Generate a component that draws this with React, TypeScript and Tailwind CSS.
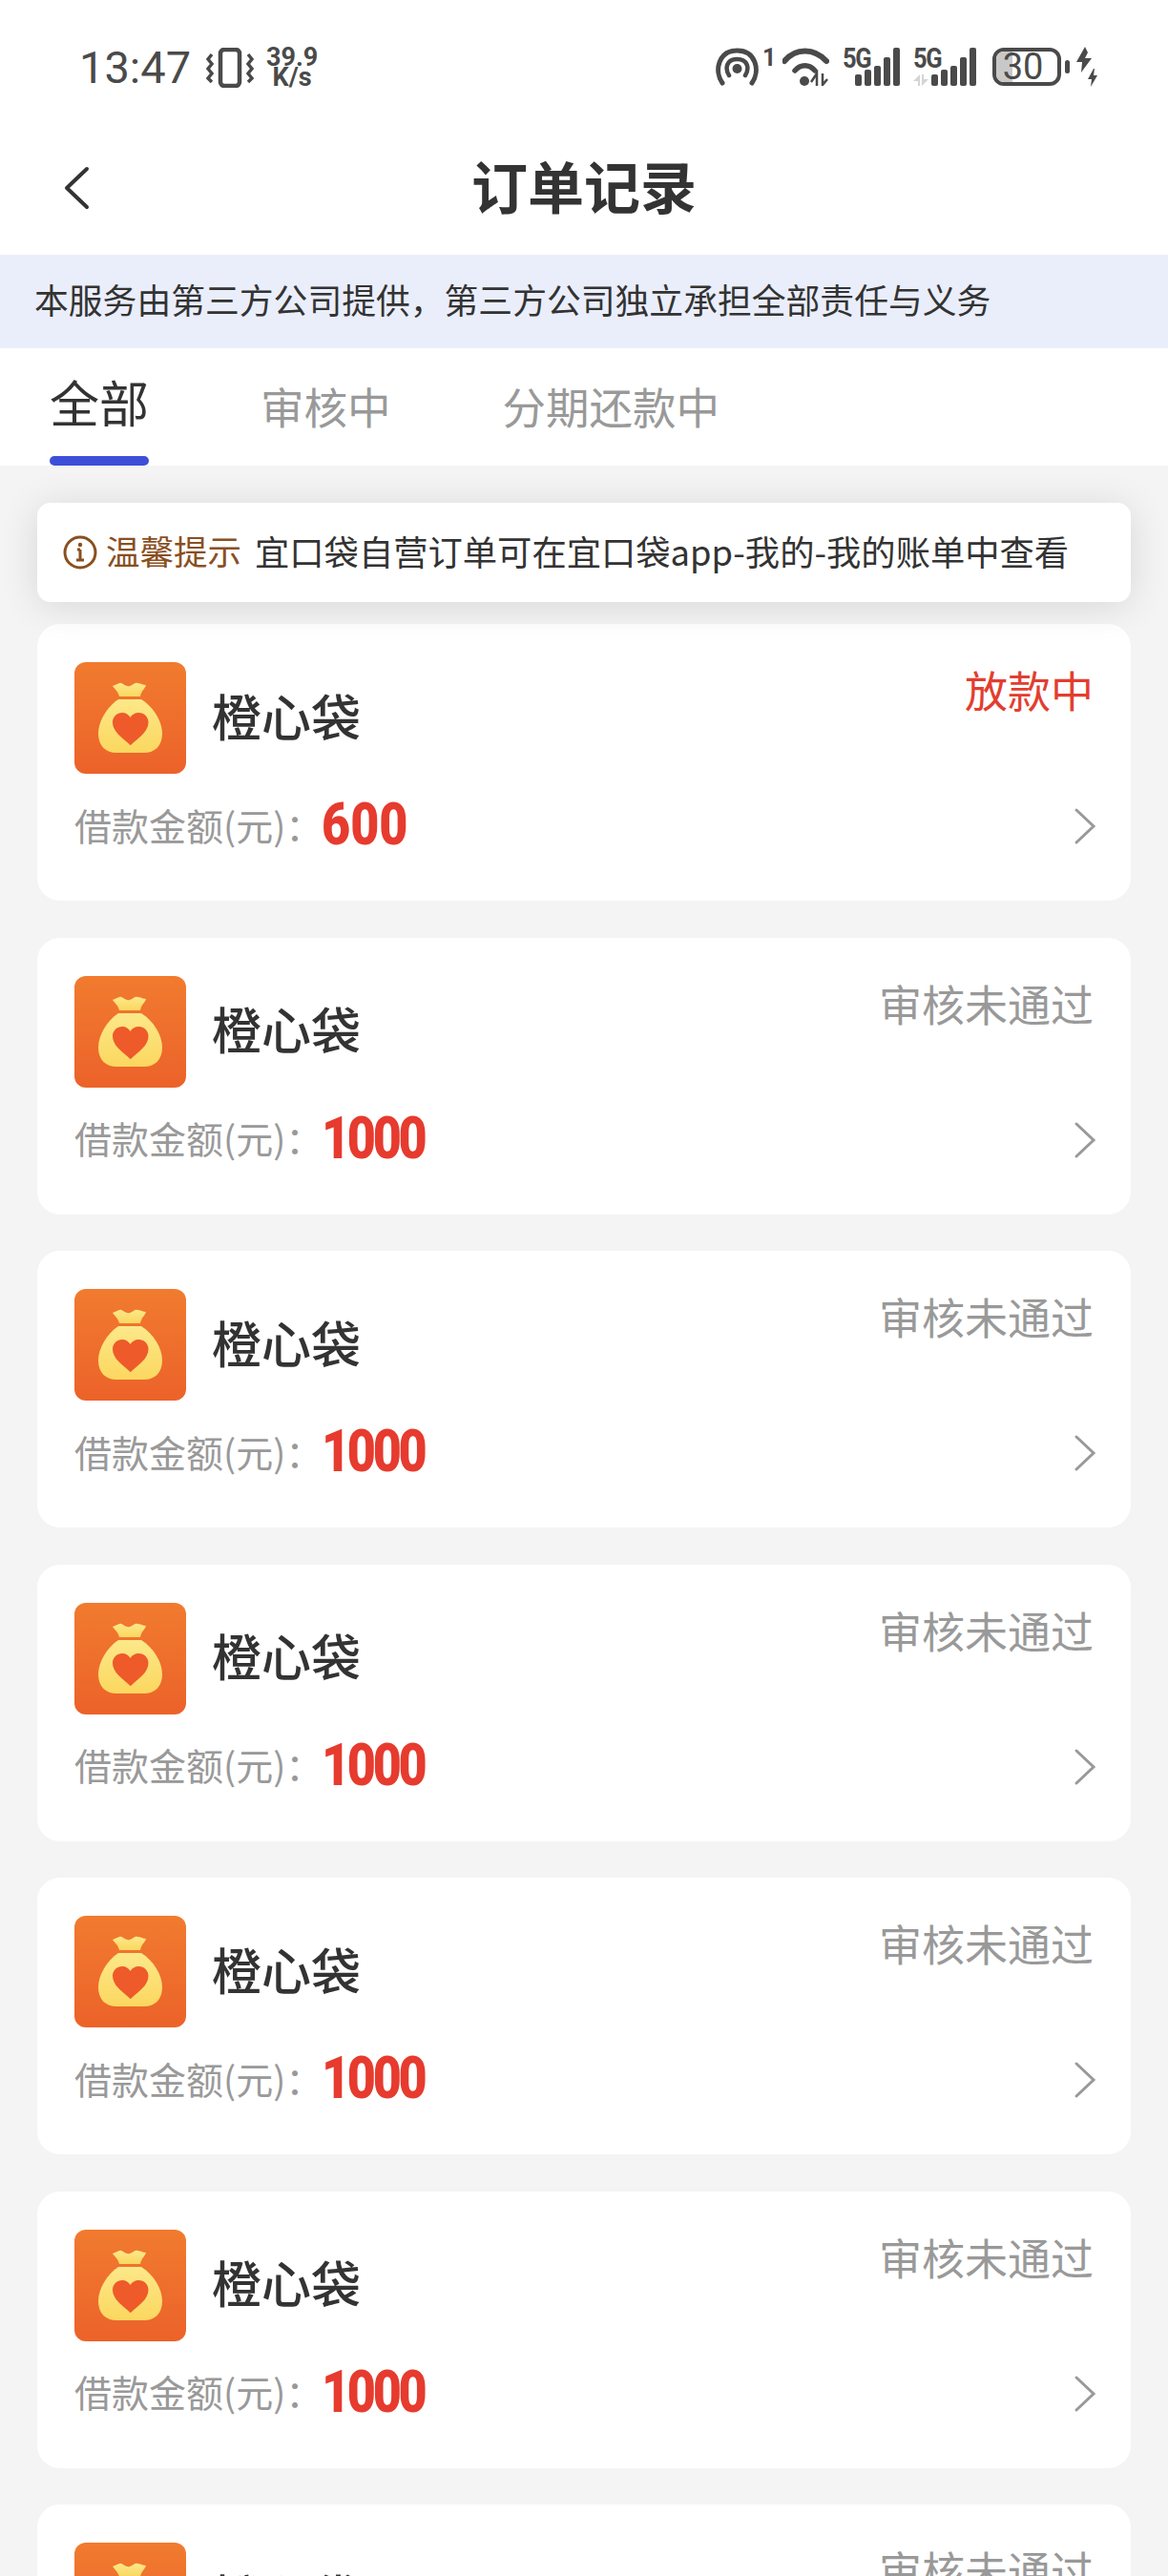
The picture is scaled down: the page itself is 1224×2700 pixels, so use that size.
const FONT = '"Noto Sans CJK SC", "Noto Sans", sans-serif';

const orders = [
  { amount: '600', status: '放款中', active: true },
  { amount: '1000', status: '审核未通过', active: false },
  { amount: '1000', status: '审核未通过', active: false },
  { amount: '1000', status: '审核未通过', active: false },
  { amount: '1000', status: '审核未通过', active: false },
  { amount: '1000', status: '审核未通过', active: false },
  { amount: '1000', status: '审核未通过', active: false },
];

const BagIcon = () => (
  <svg viewBox="0 0 117 117" className="w-[117px] h-[117px] shrink-0 rounded-[12px]">
    <defs>
      <linearGradient id="bagBg" x1="0" y1="0" x2="0" y2="1">
        <stop offset="0" stopColor="#f17b2f" />
        <stop offset="1" stopColor="#ec622a" />
      </linearGradient>
      <linearGradient id="bagBody" x1="0" y1="0" x2="0" y2="1">
        <stop offset="0" stopColor="#fce88a" />
        <stop offset="1" stopColor="#fbd75f" />
      </linearGradient>
    </defs>
    <rect width="117" height="117" fill="url(#bagBg)" />
    <path
      d="M40 25c4-1 7-4 9-3 3 1 5 4 9 3 4-1 5-4 8-3 3 0 6 2 9 2-1 4-5 6-6 12H47c-1-5-5-8-7-11z"
      fill="url(#bagBody)"
    />
    <path
      d="M46 39h24c13 8 22 23 22 36 0 13-8 20-19 20H44c-11 0-19-7-19-20 0-13 9-28 21-36z"
      fill="url(#bagBody)"
    />
    <path
      d="M58.500 87C50 79 40 73 40 63c0-6 5-10 10-10 4 0 7 2 8.500 5 1.500-3 5-5 9-5 5 0 10 4 10 10 0 10-10 16-18.500 24z"
      fill="#ee5a2a"
    />
  </svg>
);

const Bars = () => (
  <>
    <i className="block w-[7px] h-[12px] rounded-[2px] bg-[#4a4a4a]" />
    <i className="block w-[7px] h-[17px] rounded-[2px] bg-[#4a4a4a]" />
    <i className="block w-[7px] h-[21px] rounded-[2px] bg-[#4a4a4a]" />
    <i className="block w-[7px] h-[30px] rounded-[2px] bg-[#4a4a4a]" />
    <i className="block w-[7px] h-[40px] rounded-[2px] bg-[#4a4a4a]" />
  </>
);

const Signal = ({ className, faded }: { className: string; faded: boolean }) => (
  <div className={`relative h-[40px] flex items-end justify-end gap-[3px] ${className}`}>
    <span className="absolute left-0 top-[-4px] text-[30px] leading-[30px] font-bold font-['Roboto'] tracking-[-1.500px] origin-left scale-x-[0.85]">
      5G
    </span>
    {faded ? (
      <svg viewBox="0 0 16 12" className="absolute left-0 bottom-0 w-[16px] h-[12px]" fill="#d4d4d4">
        <path d="M7 0v12H5V7H0zM9 0h2v5h5l-7 7z" />
      </svg>
    ) : null}
    <Bars />
  </div>
);

const StatusBar = () => (
  <div className="h-[130px] pl-[83px] pr-[74px] flex items-start pt-[50px] justify-between text-[#4a4a4a]">
    <div className="flex items-center h-[42px]">
      <span className="w-[117px] text-[47px] leading-[42px] font-normal font-['Roboto']">13:47</span>
      <svg viewBox="0 0 50 42" className="w-[50px] h-[42px] ml-[16px]" fill="none" stroke="#4a4a4a">
        <rect x="15" y="2" width="20" height="38" rx="4" strokeWidth="4.500" />
        <path d="M6 7L2 12l4 5-4 5 4 5-4 5 4 4" strokeWidth="3.500" />
        <path d="M44 7l4 5-4 5 4 5-4 5 4 5-4 4" strokeWidth="3.500" />
      </svg>
      <div className="ml-[13px] w-[54px] text-center font-['Roboto'] font-bold text-[27px] leading-[21px] whitespace-nowrap">
        <div>39.9</div>
        <div>K/s</div>
      </div>
    </div>
    <div className="flex items-center h-[40px]">
      <svg viewBox="0 0 45 40" className="w-[45px] h-[40px]" fill="none" stroke="#4a4a4a" strokeLinecap="round">
        <path d="M7 37C-2 24 3 3 22.500 3S47 24 38 37" strokeWidth="5" />
        <path d="M14 29c-5-8-2-17 8.500-17S36 21 31 29" strokeWidth="4.500" />
        <circle cx="22.500" cy="22" r="5" fill="#4a4a4a" stroke="none" />
      </svg>
      <span className="ml-[4px] w-[8px] self-start text-[25px] leading-[22px] font-bold font-['Roboto']">1</span>
      <svg viewBox="0 0 49 40" className="w-[49px] h-[40px] ml-[13px]" fill="none" stroke="#4a4a4a">
        <path d="M2 14C14 0 33 0 46 14" strokeWidth="6" strokeLinecap="round" />
        <path d="M13 24c6-7 15-7 21 0" strokeWidth="5.500" strokeLinecap="round" />
        <circle cx="23" cy="35" r="5" fill="#4a4a4a" stroke="none" />
        <path d="M36 40V27l-6 9M42 27v12l5-6" strokeWidth="2.500" />
      </svg>
      <Signal className="ml-[14px] w-[60px]" faded={false} />
      <Signal className="ml-[14px] w-[66px]" faded />
      <div className="ml-[17px] w-[72px] h-[40px] rounded-[12px] border-[4px] border-[#4a4a4a] relative flex items-center justify-center">
        <div className="absolute inset-y-0 left-0 w-[17px] rounded-l-[8px] bg-[#c8c8c8]" />
        <span className="relative text-[38px] leading-[32px] font-['Roboto'] pr-[8px]">30</span>
      </div>
      <div className="ml-[4px] w-[5px] h-[14px] rounded-full bg-[#4a4a4a]" />
      <svg viewBox="0 0 22 42" className="w-[22px] h-[42px] ml-[7px]" fill="#4a4a4a">
        <path d="M9 0L0 16h6l-1 11 11-15H9l3-6z" />
        <path d="M18 23l-6 11h4l-1 8 7-12h-4l1-7z" />
      </svg>
    </div>
  </div>
);

const OrderCard = ({ amount, status, active }: { amount: string; status: string; active: boolean }) => (
  <div className="bg-white rounded-[24px] h-[290px] pt-[40px] pl-[39px] pr-[39px] mb-[38.500px] shrink-0">
    <div className="flex items-center">
      <BagIcon />
      <span className="ml-[27px] pb-[6px] text-[52px] leading-[70px] font-medium text-[#333333]">橙心袋</span>
      <span className={`ml-auto self-start text-[45px] leading-[58px] ${active ? 'text-[#e23e30]' : 'text-[#999999]'}`}>
        {status}
      </span>
    </div>
    <div className="flex items-center h-[60px] mt-[25px]">
      <span className="w-[259px] pb-[4px] text-[39px] text-[#999999] whitespace-nowrap">借款金额(元)：</span>
      <span
        className={`pb-[4px] text-[62px] leading-[60px] font-black font-['Roboto'] text-[#e63b2e] origin-left scale-x-[0.84] ${
          amount.length > 3 ? 'tracking-[-4px]' : 'tracking-[0px]'
        }`}
      >
        {amount}
      </span>
      <svg viewBox="0 0 26 40" className="ml-auto -mr-[4px] w-[26px] h-[40px]" fill="none" stroke="#999999" strokeWidth="3" strokeLinecap="round">
        <path d="M4 3l18 17L4 37" />
      </svg>
    </div>
  </div>
);

export default function App() {
  return (
    <div className="w-[1224px] h-[2700px] overflow-hidden bg-[#f4f4f4]" style={{ fontFamily: FONT }}>
      <div className="bg-white">
        <StatusBar />
        <div className="relative h-[137px] flex items-center justify-center pb-[10px]">
          <svg viewBox="0 0 28 46" className="absolute left-[66px] top-[44px] w-[28px] h-[46px]" fill="none" stroke="#333333" strokeWidth="4" strokeLinecap="round" strokeLinejoin="round">
            <path d="M25 3L4 23l21 20" />
          </svg>
          <h1 className="text-[59px] font-bold text-[#333333] leading-none">订单记录</h1>
        </div>
        <div className="h-[98px] bg-[#eaeefb] pl-[36px] pb-[4px] flex items-center text-[35.800px] text-[#333333] whitespace-nowrap">
          本服务由第三方公司提供，第三方公司独立承担全部责任与义务
        </div>
        <div className="h-[123px] flex pl-[52px]">
          <div className="relative w-[104px] pt-[20px] text-center text-[52px] leading-[72px] text-[#333333]">
            全部
            <div className="absolute bottom-0 left-0 right-0 h-[10px] rounded-full bg-[#3d4fd8]" />
          </div>
          <div className="ml-[117px] pt-[28px] text-[45.500px] leading-[64px] text-[#999999]">审核中</div>
          <div className="ml-[117px] pt-[28px] text-[45.500px] leading-[64px] text-[#999999]">分期还款中</div>
        </div>
      </div>
      <div className="px-[39px] pt-[39px]">
        <div className="relative z-10 h-[104px] mb-[23px] bg-white rounded-[14px] shadow-[0_4px_40px_rgba(0,0,0,0.12)] pl-[27px] pb-[4px] flex items-center whitespace-nowrap">
          <svg viewBox="0 0 36 36" className="w-[36px] h-[36px] shrink-0 mt-[4px]" fill="none" stroke="#8a4f1f">
            <circle cx="18" cy="18" r="16" strokeWidth="3" />
            <path d="M18 15v11M14 26h8M15 15h3" strokeWidth="3" />
            <circle cx="18" cy="10" r="2.200" fill="#8a4f1f" stroke="none" />
          </svg>
          <span className="ml-[9px] text-[35.500px] text-[#8a4f1f]">温馨提示</span>
          <span className="ml-[14px] text-[36.300px] text-[#333333]">宜口袋自营订单可在宜口袋app-我的-我的账单中查看</span>
        </div>
        {orders.map((o, i) => (
          <OrderCard key={i} amount={o.amount} status={o.status} active={o.active} />
        ))}
      </div>
    </div>
  );
}
